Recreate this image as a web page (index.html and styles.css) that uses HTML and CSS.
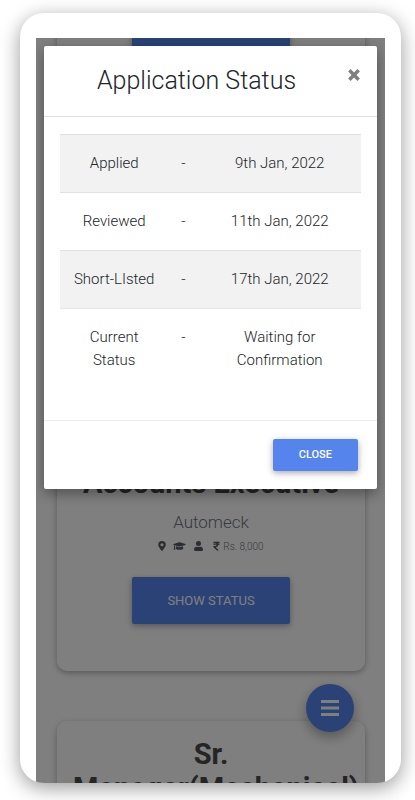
FILE: index.html
```html
<!DOCTYPE html>
<html lang="en">
<head>
<meta charset="utf-8">
<meta name="viewport" content="width=device-width, initial-scale=1">
<title>Application Status</title>
<link rel="stylesheet" href="styles.css">
</head>
<body>
<div class="phone">
  <div class="screen">
    <main class="jobs">
      <article class="job job-first">
        <button class="btn btn-status" type="button">Show Status</button>
      </article>
      <article class="job job-tall">
        <h2>Accounts Executive</h2>
        <p class="company">Automeck</p>
        <p class="facts">
          <svg class="pin" viewBox="0 0 384 512" aria-hidden="true"><path d="M172 502C27 291 0 270 0 192a192 192 0 0 1 384 0c0 78-27 99-172 310a24 24 0 0 1-40 0zM192 272a80 80 0 1 0 0-160 80 80 0 0 0 0 160z"/></svg>
          <svg class="cap" viewBox="0 0 640 512" aria-hidden="true"><path d="M622 153 343 67a80 80 0 0 0-46 0L18 153c-24 7-24 39 0 46l49 15c-11 13-17 29-18 46a32 32 0 0 0-3 54L20 428c-2 10 6 20 16 20h56c10 0 18-10 16-20L82 314a32 32 0 0 0-2-53c1-14 8-26 20-34l197 60a80 80 0 0 0 46 0l279-88c24-7 24-39 0-46zM353 318a112 112 0 0 1-66 0l-145-45-14 111c0 35 86 64 192 64s192-29 192-64l-14-111z"/></svg>
          <svg class="user" viewBox="0 0 448 512" aria-hidden="true"><path d="M224 256a128 128 0 1 0 0-256 128 128 0 0 0 0 256zm90 32h-17a174 174 0 0 1-146 0h-17A134 134 0 0 0 0 422v42a48 48 0 0 0 48 48h352a48 48 0 0 0 48-48v-42a134 134 0 0 0-134-134z"/></svg>
          <svg class="rupee" viewBox="0 0 320 512" aria-hidden="true"><path d="M308 96c7 0 12-5 12-12V44c0-7-5-12-12-12H12C5 32 0 37 0 44v45c0 6 5 11 12 11h85c28 0 48 10 61 28H12c-7 0-12 5-12 12v40c0 7 5 12 12 12h157c-6 36-32 58-73 58H12c-7 0-12 5-12 12v53c0 3 1 7 4 9l165 152c2 2 5 4 8 4h82c11 0 16-14 8-21L116 320c76-3 131-50 138-128h54c7 0 12-5 12-12v-40c0-7-5-12-12-12h-58c-3-12-7-22-13-32z"/></svg>
          <span>Rs. 8,000</span>
        </p>
        <button class="btn btn-status" type="button">Show Status</button>
      </article>
      <article class="job">
        <h2>Sr. Manager(Mechanical)</h2>
      </article>
    </main>
    <button class="fab" type="button" aria-label="Menu">
      <svg viewBox="0 0 18 16" aria-hidden="true"><path d="M0 0h18v3H0zM0 6.500h18v3H0zM0 13h18v3H0z"/></svg>
    </button>
    <div class="backdrop">
      <section class="modal" role="dialog" aria-labelledby="modal-title">
        <header class="modal-header">
          <h1 id="modal-title">Application Status</h1>
          <button class="dismiss" type="button" aria-label="Dismiss">
            <svg viewBox="0 0 12 12" aria-hidden="true"><path d="M2 2l8 8M10 2l-8 8"/></svg>
          </button>
        </header>
        <div class="modal-body">
          <table>
            <colgroup><col class="col-step"><col class="col-dash"><col class="col-date"></colgroup>
            <tbody>
              <tr><td>Applied</td><td>-</td><td>9th Jan, 2022</td></tr>
              <tr><td>Reviewed</td><td>-</td><td>11th Jan, 2022</td></tr>
              <tr><td>Short-LIsted</td><td>-</td><td>17th Jan, 2022</td></tr>
              <tr><td>Current Status</td><td>-</td><td>Waiting for Confirmation</td></tr>
            </tbody>
          </table>
        </div>
        <footer class="modal-footer">
          <button class="btn btn-close" type="button">Close</button>
        </footer>
      </section>
    </div>
  </div>
</div>
</body>
</html>
```
FILE: styles.css
```css
* { box-sizing: border-box; }

body {
  margin: 0;
  height: 100vh;
  padding: 13px 14px 17px 20px;
  overflow: hidden;
  background: #fff;
  color: #212529;
  font-family: Roboto, "Liberation Sans", sans-serif;
  font-weight: 300;
}

h1, h2, p { margin: 0; }

.phone {
  height: 100%;
  padding: 25px 16px 0;
  overflow: hidden;
  border-radius: 24px;
  background: #fff;
  box-shadow: 0 5px 20px rgba(0, 0, 0, .4);
}

.screen {
  position: relative;
  height: 100%;
  overflow: hidden;
}

.jobs {
  display: flex;
  flex-direction: column;
  gap: 50px;
  margin-top: -16px;
  padding: 0 20px 0 21px;
}

.job {
  display: flex;
  flex-direction: column;
  align-items: center;
  padding: 16px 16px 47px;
  border-radius: 10px;
  box-shadow: 0 2px 5px rgba(0, 0, 0, .2), 0 2px 10px rgba(0, 0, 0, .12);
  text-align: center;
}

.job-first { padding-top: 8px; }
.job-tall { padding-top: 292px; }

.job h2 {
  width: 100%;
  color: #4a4a4a;
  font-size: 29px;
  line-height: 34px;
  font-weight: 700;
}

.company {
  margin-top: 10px;
  color: #6c757d;
  font-size: 17px;
  line-height: 24px;
}

.facts {
  display: flex;
  align-items: center;
  height: 16px;
  margin: 4px 0 23px;
  color: #6c757d;
  font-size: 10px;
}

.facts svg {
  height: 10px;
  fill: #545b62;
}

.facts .pin { width: 8px; margin-right: 7px; }
.facts .cap { width: 13px; margin-right: 8px; }
.facts .user { width: 9px; margin-right: 10px; }
.facts .rupee { width: 7px; margin-right: 3px; }

.btn {
  border: 0;
  border-radius: 2px;
  background: #5584ed;
  color: #fff;
  box-shadow: 0 2px 5px rgba(0, 0, 0, .2), 0 2px 10px rgba(0, 0, 0, .16);
  font-family: inherit;
  text-transform: uppercase;
}

.btn-status {
  padding: 15px 35px;
  font-size: 13px;
  line-height: 17px;
  font-weight: 400;
}

.fab {
  position: absolute;
  right: 31px;
  bottom: 51px;
  display: grid;
  place-items: center;
  width: 48px;
  height: 48px;
  padding: 0;
  border: 0;
  border-radius: 50%;
  background: #5584ed;
  box-shadow: 0 5px 11px rgba(0, 0, 0, .2), 0 4px 15px rgba(0, 0, 0, .16);
}

.fab svg {
  width: 18px;
  height: 16px;
  fill: #fff;
}

.backdrop {
  position: absolute;
  inset: 0;
  padding: 8px;
  background: rgba(0, 0, 0, .5);
}

.modal {
  border-radius: 2px;
  background: #fff;
  box-shadow: 0 5px 11px rgba(0, 0, 0, .2), 0 4px 15px rgba(0, 0, 0, .16);
}

.modal-header {
  display: flex;
  align-items: flex-start;
  padding: 16px;
  border-bottom: 1px solid #dee2e6;
}

.modal-header h1 {
  flex: 1;
  padding-right: 14px;
  font-size: 25px;
  line-height: 38px;
  font-weight: 300;
  text-align: center;
}

.dismiss {
  padding: 6px 0;
  border: 0;
  background: none;
}

.dismiss svg {
  display: block;
  width: 14px;
  height: 14px;
  fill: none;
  stroke: #808080;
  stroke-width: 3;
}

.modal-body { padding: 17px 16px 31px; }

table {
  width: 100%;
  border-collapse: collapse;
  table-layout: fixed;
  font-size: 15px;
  line-height: 23px;
  text-align: center;
}

.col-step { width: 36%; }
.col-dash { width: 10%; }

td {
  padding: 17px 12px;
  vertical-align: top;
}

td:nth-child(2) { padding: 17px 0; }
td:nth-child(3) { padding: 17px 32px; }

tr { border-top: 1px solid #dee2e6; }
tr:nth-child(odd) { background: #f2f2f2; }
tr:last-child { border-top-color: #e6e6e6; }

.modal-footer {
  display: flex;
  justify-content: flex-end;
  padding: 18px 19px;
  border-top: 1px solid #e9ecef;
}

.btn-close {
  padding: 9px 26px;
  font-size: 11px;
  line-height: 14px;
  font-weight: 500;
}
```
